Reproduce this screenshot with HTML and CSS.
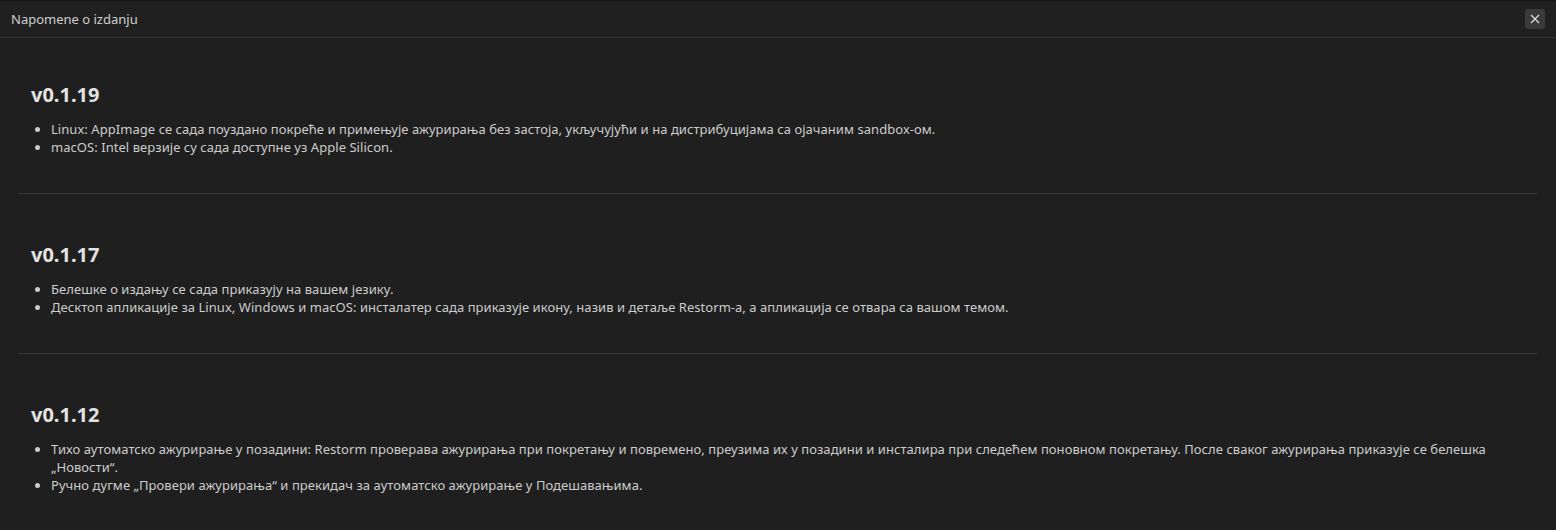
FILE: index.html
```html
<!DOCTYPE html>
<html>
<head>
<meta charset="utf-8">
<title>Napomene o izdanju</title>
<link rel="stylesheet" href="styles.css">
</head>
<body>
<div class="dialog">
<div class="dialogHeader">
<span class="dialogTitle">Napomene o izdanju</span>
<button class="closeButton" title="Close">
<svg width="10" height="10" viewBox="0 0 10 10"><path d="M1 1L9 9M9 1L1 9" stroke="#dedede" stroke-width="1.2" fill="none"/></svg>
</button>
</div>

<div class="notes">
<div class="release">
<h2>v0.1.19</h2>
<ul>
<li>Linux: AppImage се сада поуздано покреће и примењује ажурирања без застоја, укључујући и на дистрибуцијама са ојачаним sandbox-ом.</li>
<li>macOS: Intel верзије су сада доступне уз Apple Silicon.</li>
</ul>
</div>
<div class="release">
<h2>v0.1.17</h2>
<ul>
<li>Белешке о издању се сада приказују на вашем језику.</li>
<li>Десктоп апликације за Linux, Windows и macOS: инсталатер сада приказује икону, назив и детаље Restorm-а, а апликација се отвара са вашом темом.</li>
</ul>
</div>
<div class="release">
<h2>v0.1.12</h2>
<ul>
<li>Тихо аутоматско ажурирање у позадини: Restorm проверава ажурирања при покретању и повремено, преузима их у позадини и инсталира при следећем поновном покретању. После сваког ажурирања приказује се белешка „Новости“.</li>
<li>Ручно дугме „Провери ажурирања“ и прекидач за аутоматско ажурирање у Подешавањима.</li>
</ul>
</div>
</div>
</div>
</body>
</html>
```

FILE: styles.css
```css
html, body {
margin: 0;
padding: 0;
background-color: #1f1f1f;
}

body {
font-family: "Noto Sans", "Open Sans", sans-serif;
color: #cccccc;
height: 530px;
overflow: hidden;
}

.dialog {
height: 100%;
border-top: 1px solid #151515;
box-sizing: border-box;
}

.dialogHeader {
height: 36px;
display: flex;
align-items: center;
justify-content: space-between;
padding: 0 11px;
border-bottom: 1px solid #363636;
background-color: #202020;
}

.dialogTitle {
font-size: 13px;
color: #cfcfcf;
}

.closeButton {
width: 20px;
height: 20px;
padding: 0;
border: none;
border-radius: 3px;
background-color: #3a3a3a;
display: flex;
align-items: center;
justify-content: center;
}

.notes {
padding: 0 19px;
}

.release {
padding: 49px 12px 37px 12px;
border-bottom: 1px solid #3a3a3a;
}

.release:first-child {
padding-top: 45px;
}

.release:last-child {
border-bottom: none;
}

.release h2 {
margin: 0;
font-size: 20px;
line-height: 24px;
font-weight: 700;
color: #e2e2e2;
}

.release ul {
margin: 13px 0 0 0;
padding-left: 20px;
font-size: 13px;
line-height: 18px;
letter-spacing: 0.05px;
}
```
